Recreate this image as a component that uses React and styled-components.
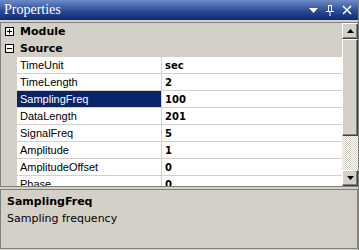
import React from 'react'
import styled, { createGlobalStyle } from 'styled-components'

const Global = createGlobalStyle`
  body { margin: 0; background: #d4d0c8; }
`

const Panel = styled.div`
  width: 359px;
  height: 250px;
  background: #d4d0c8;
  display: flex;
  flex-direction: column;
  font-family: "Liberation Sans", Arial, sans-serif;
  font-size: 11px;
  color: #000;
  box-sizing: border-box;
  border-right: 1px solid #808080;
  overflow: hidden;
`

const TitleBar = styled.div`
  height: 20px;
  flex: none;
  display: flex;
  align-items: center;
  padding: 0 6px 0 4px;
  background: linear-gradient(#6c8bc6, #2b4b95 55%, #0e2a72);
  color: #fff;
  font-family: "Liberation Serif", "Times New Roman", serif;
  font-size: 14px;
`

const Title = styled.div`
  flex: 1;
`

const TitleButtons = styled.div`
  display: flex;
  align-items: center;
  gap: 8px;
`

const Grid = styled.div`
  margin-top: 2px;
  height: 165px;
  flex: none;
  display: flex;
  border-top: 1px solid #808080;
  border-left: 1px solid #808080;
  border-bottom: 1px solid #808080;
  box-sizing: border-box;
`

const Rows = styled.div`
  flex: 1;
  overflow: hidden;
`

const Category = styled.div`
  height: 17px;
  display: flex;
  align-items: center;
  font-family: "DejaVu Sans", Tahoma, sans-serif;
  font-weight: bold;
  font-size: 11px;
`

const Toggle = styled.div`
  width: 17px;
  display: flex;
  justify-content: center;
  align-items: center;
  margin-right: 2px;
`

const Row = styled.div`
  height: 17px;
  display: flex;
`

const Gutter = styled.div`
  width: 16px;
  flex: none;
`

const Label = styled.div`
  width: 145px;
  flex: none;
  box-sizing: border-box;
  padding-left: 3px;
  display: flex;
  align-items: center;
  background: ${p => (p.$selected ? '#0a246a' : '#fff')};
  color: ${p => (p.$selected ? '#fff' : '#000')};
  border-bottom: 1px solid #d4d0c8;
  border-right: 1px solid #d4d0c8;
`

const Value = styled.div`
  flex: 1;
  padding-left: 3px;
  display: flex;
  align-items: center;
  background: #fff;
  font-weight: bold;
  font-family: "DejaVu Sans", Tahoma, sans-serif;
  font-size: 10px;
  border-bottom: 1px solid #d4d0c8;
`

const Scrollbar = styled.div`
  width: 16px;
  flex: none;
  display: flex;
  flex-direction: column;
  background-color: #fff;
  background-image: conic-gradient(#d4d0c8 25%, #fff 0 50%, #d4d0c8 0 75%, #fff 0);
  background-size: 2px 2px;
`

const ScrollButton = styled.div`
  height: 16px;
  flex: none;
  box-sizing: border-box;
  background: #d4d0c8;
  border: 1px solid;
  border-color: #fff #404040 #404040 #fff;
  box-shadow: inset -1px -1px #808080;
  display: flex;
  align-items: center;
  justify-content: center;
`

const Thumb = styled.div`
  height: ${p => p.$size}px;
  flex: none;
  box-sizing: border-box;
  background: #d4d0c8;
  border: 1px solid;
  border-color: #fff #404040 #404040 #fff;
  box-shadow: inset -1px -1px #808080;
`

const Track = styled.div`
  flex: 1;
`

const Description = styled.div`
  margin: 2px 0 1px 0;
  flex: 1;
  border: 1px solid #808080;
  padding: 5px 6px;
  font-family: "DejaVu Sans", Tahoma, sans-serif;
  font-size: 11px;
`

const DescTitle = styled.div`
  font-weight: bold;
  margin-bottom: 4px;
`

const Box = ({ open }) => (
  <svg width="9" height="9" viewBox="0 0 9 9">
    <rect x="0.5" y="0.5" width="8" height="8" fill="#fff" stroke="#000" />
    <line x1="2" y1="4.5" x2="7" y2="4.5" stroke="#000" />
    {!open && <line x1="4.5" y1="2" x2="4.5" y2="7" stroke="#000" />}
  </svg>
)

const Arrow = ({ up }) => (
  <svg width="7" height="4" viewBox="0 0 7 4">
    <path d={up ? 'M3.5 0 L7 4 L0 4 Z' : 'M0 0 L7 0 L3.5 4 Z'} fill="#000" />
  </svg>
)

const props = [
  ['TimeUnit', 'sec'],
  ['TimeLength', '2'],
  ['SamplingFreq', '100'],
  ['DataLength', '201'],
  ['SignalFreq', '5'],
  ['Amplitude', '1'],
  ['AmplitudeOffset', '0'],
  ['Phase', '0'],
]

export default function App() {
  return (
    <Panel>
      <Global />
      <TitleBar>
        <Title>Properties</Title>
        <TitleButtons>
          <svg width="9" height="5" viewBox="0 0 9 5"><path d="M0 0 L9 0 L4.5 5 Z" fill="#fff" /></svg>
          <svg width="8" height="11" viewBox="0 0 8 11">
            <path d="M2 0.5 H6 M2.5 0.5 V6.5 M5.5 0.5 V6.5 M0 6.5 H8 M4 6.5 V11" stroke="#fff" strokeWidth="1" fill="none" />
          </svg>
          <svg width="10" height="10" viewBox="0 0 10 10">
            <path d="M1 1 L9 9 M9 1 L1 9" stroke="#fff" strokeWidth="1.6" />
          </svg>
        </TitleButtons>
      </TitleBar>
      <Grid>
        <Rows>
          <Category><Toggle><Box /></Toggle>Module</Category>
          <Category><Toggle><Box open /></Toggle>Source</Category>
          {props.map(([k, v]) => (
            <Row key={k}>
              <Gutter />
              <Label $selected={k === 'SamplingFreq'}>{k}</Label>
              <Value>{v}</Value>
            </Row>
          ))}
        </Rows>
        <Scrollbar>
          <ScrollButton><Arrow up /></ScrollButton>
          <Thumb $size={97} />
          <Track />
          <ScrollButton><Arrow /></ScrollButton>
        </Scrollbar>
      </Grid>
      <Description>
        <DescTitle>SamplingFreq</DescTitle>
        <div>Sampling frequency</div>
      </Description>
    </Panel>
  )
}
